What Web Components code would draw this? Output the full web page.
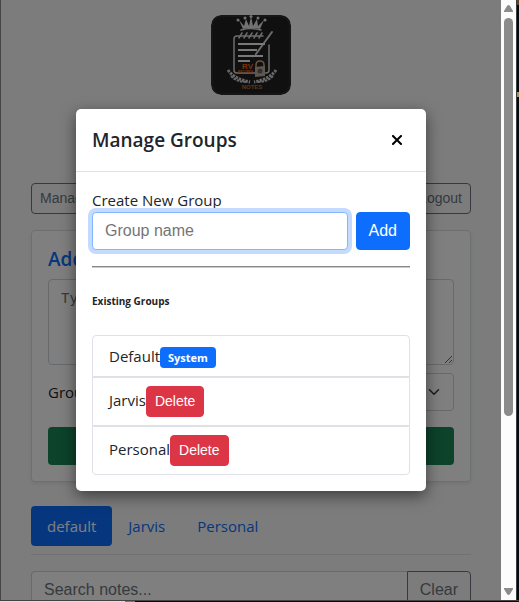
<!DOCTYPE html>
<html lang="en">
<head>
<meta charset="utf-8">
<title>Notes</title>
<style>
html,body{margin:0;height:100%;overflow:hidden}
body{font-family:"Open Sans","Noto Sans",sans-serif;font-size:15px;line-height:24px;color:#212529;background:#05090d}
</style>
</head>
<body>
<notes-window></notes-window>
<script>
function define(name, html) {
  customElements.define(name, class extends HTMLElement {
    constructor() {
      super();
      this.attachShadow({mode: 'open'}).innerHTML = '<style>*{box-sizing:border-box}:host{display:block}</style>' + html;
    }
  });
}

define('notes-logo', `
<style>
:host{width:80px;height:80px}
svg{display:block;border-radius:10px}
text{font:bold 7px "Liberation Sans",sans-serif}
</style>
<svg width="80" height="80" viewBox="0 0 80 80" role="img" aria-label="RV Notes">
  <rect width="80" height="80" rx="10" fill="#2c2c2c"/>
  <rect x="2" y="2" width="76" height="76" rx="9" fill="#202020"/>
  <g fill="#e4e4e4" stroke="none">
    <path d="M28 5l5 6 2-7 3 7 2-10 2 10 4-7 1 7 6-6-4 9q-9-2-17 0z"/>
    <circle cx="27" cy="5" r="1.5"/><circle cx="34" cy="3" r="1.5"/><circle cx="40" cy="1.5" r="1.5"/><circle cx="47" cy="3" r="1.5"/><circle cx="54" cy="5" r="1.5"/>
  </g>
  <g fill="none" stroke="#d8d8d8" stroke-linecap="round">
    <path d="M30 15q10-3 20 0" stroke-width="1.5"/>
    <path d="M27 21h-1q-3 0-3 3v31q0 3 3 3h29q3 0 3-3V30M27 21h25" stroke-width="1.5"/>
    <path d="M28 23l3-5m2 5l3-5m2 5l3-5m2 5l3-5m2 5l3-5" stroke-width="1.5"/>
    <path d="M61 17L45 39" stroke-width="2"/><path d="M45 39l-3 3" stroke-width="1"/>
  </g>
  <g fill="#f2f2f2"><rect x="27" y="28" width="27" height="2"/><rect x="27" y="34" width="19" height="2"/><rect x="27" y="40" width="25" height="2"/><rect x="27" y="45" width="12" height="2"/></g>
  <g fill="none" stroke="#d0d0d0" stroke-width="3" stroke-dasharray="2.500 1">
    <path d="M17 55q6 9 22 12M65 55q-6 9-22 12"/><path d="M20 61q6 6 15 6M62 61q-6 6-15 6" stroke-width="2"/>
  </g>
  <text x="31" y="54" fill="#f06418" style="font-size:8px">RV</text>
  <text x="27" y="58" fill="#f06418" style="font-size:3px">RECORDS</text>
  <path d="M45 53v-3q0-4 4-4t4 4v3" fill="none" stroke="#d0ad84" stroke-width="1.5"/>
  <path d="M44 52l10-1v10l-10 1z" fill="#c0af94"/><circle cx="49" cy="56" r="2.5" fill="#5b6370"/>
  <text x="41" y="74" text-anchor="middle" fill="#c76a32" style="font-size:6px">NOTES</text>
</svg>`);

define('outline-button', `
<style>
:host{display:flex}
button{flex:1;font:14px/21px "Liberation Sans",sans-serif;padding:4px 8px;border:1px solid #6c757d;border-radius:4px;background:transparent;color:#6c757d}
:host([large]) button{font-size:16px;line-height:24px;padding:6px 12px;border-radius:0 4px 4px 0}
</style><button type="button"><slot></slot></button>`);

define('note-form', `
<style>
:host{background:#fff;border:1px solid #dcdfe3;border-radius:4px;padding:16px;box-shadow:0 2px 4px rgba(0,0,0,.08)}
h2{margin:0 0 8px;font-size:19px;line-height:24px;font-weight:600;color:#0d6efd}
textarea{display:block;width:100%;height:86px;padding:6px 12px;border:1px solid #ced4da;border-radius:4px;background:#fff;font:14px/24px "DejaVu Sans Mono",monospace;resize:vertical}
textarea::placeholder{color:#6c757d}
.group{display:flex;align-items:center;gap:12px;margin:8px 0 16px}
.pick{flex:1;display:grid;align-items:center}
select,.pick svg{grid-area:1/1}
select{appearance:none;width:100%;height:38px;padding:6px 12px;border:1px solid #ced4da;border-radius:4px;background:#fff;color:#212529;font:16px "Liberation Sans",sans-serif}
svg{justify-self:end;margin-right:14px;pointer-events:none}
.save{display:block;width:100%;height:38px;border:0;border-radius:4px;background:#198754;color:#fff;font:16px "Liberation Sans",sans-serif}
</style>
<h2>Add Note</h2>
<textarea aria-label="Note" placeholder="Type"></textarea>
<div class="group"><label for="g">Group:</label><div class="pick"><select id="g"><option>default</option></select>
<svg width="12" height="12" viewBox="0 0 16 16" fill="none" stroke="#343a40" stroke-width="2" stroke-linecap="round" stroke-linejoin="round"><path d="M2 5l6 6 6-6"/></svg></div></div>
<button class="save" type="button">Save</button>`);

define('group-tabs', `
<style>
nav{display:flex;padding-bottom:8px;border-bottom:1px solid #dee2e6}
a{padding:8px 16px;border-radius:4px;color:#0d6efd;text-decoration:none}
a.on{background:#0d6efd;color:#fff}
</style>
<nav><a class="on" href="#default">default</a><a href="#jarvis">Jarvis</a><a href="#personal">Personal</a></nav>`);

define('search-bar', `
<style>
:host{display:flex}
input{flex:1;min-width:0;height:38px;padding:6px 12px;border:1px solid #ced4da;border-right:0;border-radius:4px 0 0 4px;background:#fff;font:16px "Liberation Sans",sans-serif}
input::placeholder{color:#6c757d}
</style>
<input type="search" aria-label="Search notes" placeholder="Search notes..."><outline-button large>Clear</outline-button>`);

define('notes-page', `
<style>
:host{padding:15px 30px 0;background:#f8f9fa}
notes-logo{margin:0 auto 88px}
.bar{display:flex;justify-content:space-between;margin-bottom:16px}
group-tabs{margin:24px 0 16px}
</style>
<notes-logo></notes-logo>
<div class="bar"><outline-button>Manage Groups</outline-button><outline-button>Logout</outline-button></div>
<note-form></note-form>
<group-tabs></group-tabs>
<search-bar></search-bar>`);

define('group-row', `
<style>
:host{display:flex;align-items:baseline;padding:8px 16px;border:1px solid #dee2e6}
:host(:first-child){border-radius:4px 4px 0 0}
:host(:last-child){border-radius:0 0 4px 4px}
</style><slot></slot>`);

define('delete-button', `
<style>button{display:block;font:14px/21px "Liberation Sans",sans-serif;padding:4px 8px;border:1px solid #dc3545;border-radius:4px;background:#dc3545;color:#fff}</style>
<button type="button"><slot>Delete</slot></button>`);

define('system-badge', `
<style>:host{padding:0 8px;border-radius:4px;background:#0d6efd;color:#fff;font-size:11px;line-height:21px;font-weight:700}</style>
<slot></slot>`);

define('manage-groups', `
<style>
:host{width:350px;max-width:100%;background:#fff;border-radius:5px;box-shadow:0 5px 15px rgba(0,0,0,.5)}
header{display:flex;align-items:center;justify-content:space-between;padding:16px;border-bottom:1px solid #dee2e6}
h1{margin:0;font-size:19px;line-height:30px;font-weight:600}
.close{display:flex;padding:8px;border:0;background:none}
.body{padding:16px}
label{display:block}
.add{display:flex;gap:8px}
input,.add button{height:38px;font:16px/24px "Liberation Sans",sans-serif;padding:6px 12px;border-radius:4px}
input{flex:1;min-width:0;border:1px solid #86b7fe;box-shadow:0 0 0 4px #c2dbfe;outline:0;color:#212529}
input::placeholder{color:#757575}
.add button{border:1px solid #0d6efd;background:#0d6efd;color:#fff}
hr{margin:16px 0 24px;border:0;height:2px;border-top:1px solid #888;border-bottom:1px solid #ccc}
h2{margin:0 0 25px;font-size:10px;line-height:18px;font-weight:700}
</style>
<section role="dialog" aria-labelledby="t">
<header><h1 id="t">Manage Groups</h1><button class="close" type="button" aria-label="Close"><svg width="10" height="10" viewBox="0 0 10 10" stroke="#000" stroke-width="2"><path d="M1 1l8 8M9 1L1 9" stroke-linecap="square"/></svg></button></header>
<div class="body">
<label for="n">Create New Group</label>
<div class="add"><input id="n" placeholder="Group name"><button type="button">Add</button></div>
<hr>
<h2>Existing Groups</h2>
<div role="list">
<group-row role="listitem"><span>Default</span><system-badge>System</system-badge></group-row>
<group-row role="listitem"><span>Jarvis</span><delete-button></delete-button></group-row>
<group-row role="listitem"><span>Personal</span><delete-button></delete-button></group-row>
</div></div></section>`);

define('scroll-rail', `
<style>
:host{display:flex;flex-direction:column;align-items:center;background:#fcfcfc;padding:5px 0;gap:6px}
svg{flex:none}
.track{flex:1;width:9px}
.thumb{height:70.5%;border-radius:5px;background:#8b8b8b}
</style>
<svg width="9" height="7" fill="#8b8b8b"><path d="M3 1q1.500-2 3 0l3 5v1H0V6z"/></svg>
<div class="track"><div class="thumb"></div></div>
<svg width="9" height="7" fill="#8b8b8b"><path d="M3 6q1.500 2 3 0l3-5V0H0v1z"/></svg>`);

define('notes-window', `
<style>
:host{display:grid;height:100vh;grid-template:minmax(0,1fr) 2px/minmax(0,1fr) 15px 3px}
.view{position:relative;overflow:hidden;display:grid;border-left:1px solid #444;background:#f8f9fa}
.shade{position:absolute;inset:0;display:flex;align-items:center;justify-content:center;background:rgba(0,0,0,.5)}
.edge{border-left:1px solid #3c3d40;background:linear-gradient(#6b4020 5px,#05090d 5px 92px,#b08a60 92px 97px,#05090d 97px)}
.foot{grid-column:1/-1;border-top:1px solid #444;background:linear-gradient(90deg,#ddd 24%,#777 24% 26%,#0a0a0a 26%)}
</style>
<div class="view"><notes-page></notes-page><div class="shade"><manage-groups></manage-groups></div></div>
<scroll-rail></scroll-rail><div class="edge"></div><div class="foot"></div>`);
</script>
</body>
</html>
